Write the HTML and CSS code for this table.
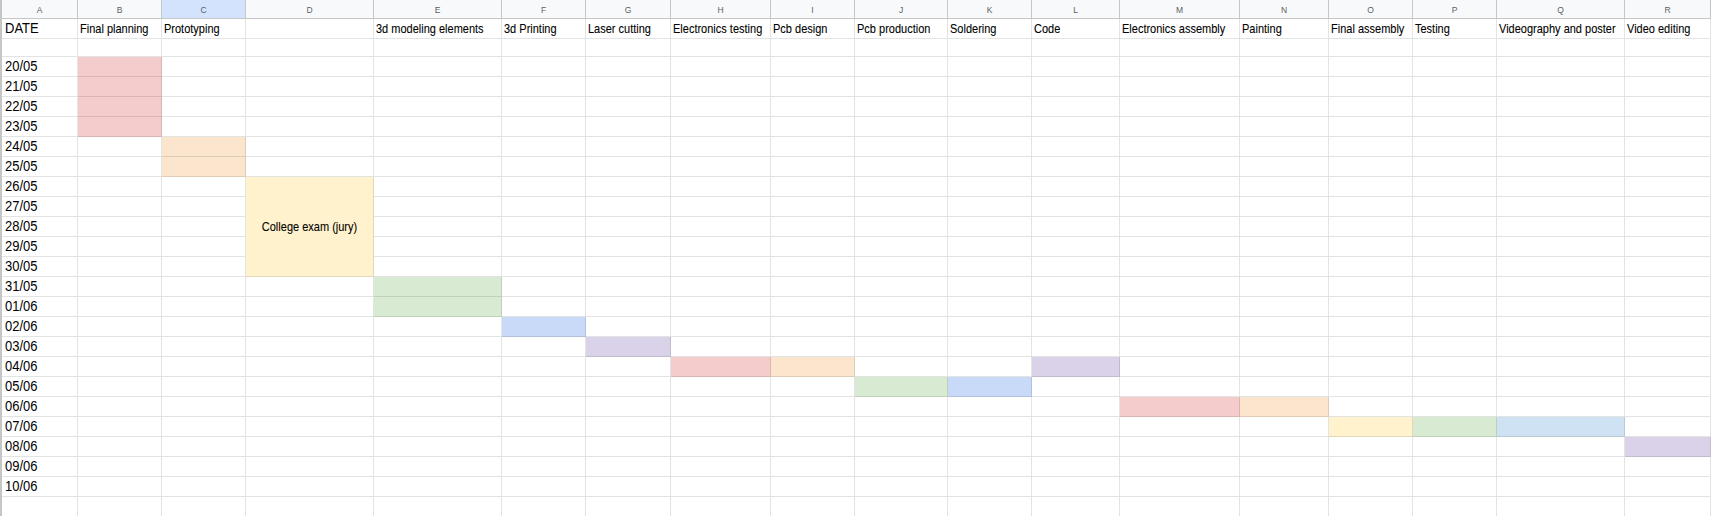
FILE: index.html
```html
<!DOCTYPE html>
<html lang="en">
<head>
<meta charset="utf-8">
<title>Project schedule</title>
<link rel="stylesheet" href="styles.css">
</head>
<body>
<div class="sheet">
  <div class="h">A</div><div class="h">B</div><div class="h sel">C</div><div class="h">D</div><div class="h">E</div><div class="h">F</div><div class="h">G</div><div class="h">H</div><div class="h">I</div><div class="h">J</div><div class="h">K</div><div class="h">L</div><div class="h">M</div><div class="h">N</div><div class="h">O</div><div class="h">P</div><div class="h">Q</div><div class="h">R</div>

  <div class="a"><span class="t">DATE</span></div><div class="l"><span class="t">Final planning</span></div><div class="l"><span class="t">Prototyping</span></div><div></div><div class="l"><span class="t">3d modeling elements</span></div><div class="l"><span class="t">3d Printing</span></div><div class="l"><span class="t">Laser cutting</span></div><div class="l"><span class="t">Electronics testing</span></div><div class="l"><span class="t">Pcb design</span></div><div class="l"><span class="t">Pcb production</span></div><div class="l"><span class="t">Soldering</span></div><div class="l"><span class="t">Code</span></div><div class="l"><span class="t">Electronics assembly</span></div><div class="l"><span class="t">Painting</span></div><div class="l"><span class="t">Final assembly</span></div><div class="l"><span class="t">Testing</span></div><div class="l"><span class="t">Videography and poster</span></div><div class="l"><span class="t">Video editing</span></div>

  <div></div><div></div><div></div><div></div><div></div><div></div><div></div><div></div><div></div><div></div><div></div><div></div><div></div><div></div><div></div><div></div><div></div><div></div>

  <div class="a"><span class="t">20/05</span></div><div class="pk"></div><div></div><div></div><div></div><div></div><div></div><div></div><div></div><div></div><div></div><div></div><div></div><div></div><div></div><div></div><div></div><div></div>
  <div class="a"><span class="t">21/05</span></div><div class="pk"></div><div></div><div></div><div></div><div></div><div></div><div></div><div></div><div></div><div></div><div></div><div></div><div></div><div></div><div></div><div></div><div></div>
  <div class="a"><span class="t">22/05</span></div><div class="pk"></div><div></div><div></div><div></div><div></div><div></div><div></div><div></div><div></div><div></div><div></div><div></div><div></div><div></div><div></div><div></div><div></div>
  <div class="a"><span class="t">23/05</span></div><div class="pk"></div><div></div><div></div><div></div><div></div><div></div><div></div><div></div><div></div><div></div><div></div><div></div><div></div><div></div><div></div><div></div><div></div>
  <div class="a"><span class="t">24/05</span></div><div></div><div class="or"></div><div></div><div></div><div></div><div></div><div></div><div></div><div></div><div></div><div></div><div></div><div></div><div></div><div></div><div></div><div></div>
  <div class="a"><span class="t">25/05</span></div><div></div><div class="or"></div><div></div><div></div><div></div><div></div><div></div><div></div><div></div><div></div><div></div><div></div><div></div><div></div><div></div><div></div><div></div>
  <div class="a"><span class="t">26/05</span></div><div></div><div></div><div class="ye merged"><span class="t mid">College exam (jury)</span></div><div></div><div></div><div></div><div></div><div></div><div></div><div></div><div></div><div></div><div></div><div></div><div></div><div></div><div></div>
  <div class="a"><span class="t">27/05</span></div><div></div><div></div><div></div><div></div><div></div><div></div><div></div><div></div><div></div><div></div><div></div><div></div><div></div><div></div><div></div><div></div>
  <div class="a"><span class="t">28/05</span></div><div></div><div></div><div></div><div></div><div></div><div></div><div></div><div></div><div></div><div></div><div></div><div></div><div></div><div></div><div></div><div></div>
  <div class="a"><span class="t">29/05</span></div><div></div><div></div><div></div><div></div><div></div><div></div><div></div><div></div><div></div><div></div><div></div><div></div><div></div><div></div><div></div><div></div>
  <div class="a"><span class="t">30/05</span></div><div></div><div></div><div></div><div></div><div></div><div></div><div></div><div></div><div></div><div></div><div></div><div></div><div></div><div></div><div></div><div></div>
  <div class="a"><span class="t">31/05</span></div><div></div><div></div><div></div><div class="gr"></div><div></div><div></div><div></div><div></div><div></div><div></div><div></div><div></div><div></div><div></div><div></div><div></div><div></div>
  <div class="a"><span class="t">01/06</span></div><div></div><div></div><div></div><div class="gr"></div><div></div><div></div><div></div><div></div><div></div><div></div><div></div><div></div><div></div><div></div><div></div><div></div><div></div>
  <div class="a"><span class="t">02/06</span></div><div></div><div></div><div></div><div></div><div class="bl"></div><div></div><div></div><div></div><div></div><div></div><div></div><div></div><div></div><div></div><div></div><div></div><div></div>
  <div class="a"><span class="t">03/06</span></div><div></div><div></div><div></div><div></div><div></div><div class="pu"></div><div></div><div></div><div></div><div></div><div></div><div></div><div></div><div></div><div></div><div></div><div></div>
  <div class="a"><span class="t">04/06</span></div><div></div><div></div><div></div><div></div><div></div><div></div><div class="pk"></div><div class="or"></div><div></div><div></div><div class="pu"></div><div></div><div></div><div></div><div></div><div></div><div></div>
  <div class="a"><span class="t">05/06</span></div><div></div><div></div><div></div><div></div><div></div><div></div><div></div><div></div><div class="gr"></div><div class="bl"></div><div></div><div></div><div></div><div></div><div></div><div></div><div></div>
  <div class="a"><span class="t">06/06</span></div><div></div><div></div><div></div><div></div><div></div><div></div><div></div><div></div><div></div><div></div><div></div><div class="pk"></div><div class="or"></div><div></div><div></div><div></div><div></div>
  <div class="a"><span class="t">07/06</span></div><div></div><div></div><div></div><div></div><div></div><div></div><div></div><div></div><div></div><div></div><div></div><div></div><div></div><div class="ye"></div><div class="gr"></div><div class="lb"></div><div></div>
  <div class="a"><span class="t">08/06</span></div><div></div><div></div><div></div><div></div><div></div><div></div><div></div><div></div><div></div><div></div><div></div><div></div><div></div><div></div><div></div><div></div><div class="pu"></div>
  <div class="a"><span class="t">09/06</span></div><div></div><div></div><div></div><div></div><div></div><div></div><div></div><div></div><div></div><div></div><div></div><div></div><div></div><div></div><div></div><div></div><div></div>
  <div class="a"><span class="t">10/06</span></div><div></div><div></div><div></div><div></div><div></div><div></div><div></div><div></div><div></div><div></div><div></div><div></div><div></div><div></div><div></div><div></div><div></div>
  <div></div><div></div><div></div><div></div><div></div><div></div><div></div><div></div><div></div><div></div><div></div><div></div><div></div><div></div><div></div><div></div><div></div><div></div>
</div>
</body>
</html>
```
FILE: styles.css
```css
* { box-sizing: border-box; }
html, body { margin: 0; padding: 0; background: #fff; overflow: hidden; }
body { font-family: "Liberation Sans", Arial, sans-serif; color: #000; }

.sheet {
  display: grid;
  grid-template-columns: 76px 84px 84px 128px 128px 84px 85px 100px 84px 93px 84px 88px 120px 89px 84px 84px 128px 86px;
  grid-template-rows: 19px 20px 18px repeat(22, 20px) 20px;
  border-left: 2px solid #c4c7c5;
  width: 1711px;
}

.sheet > div {
  border-right: 1px solid #e2e3e3;
  border-bottom: 1px solid #e2e3e3;
  overflow: hidden;
  white-space: nowrap;
}

.sheet > .h {
  background: #f8f9fa;
  border-right-color: #c4c7c5;
  border-bottom-color: #c4c7c5;
  color: #5a5e62;
  font-family: "Liberation Sans", Arial, sans-serif;
  font-size: 8.5px;
  display: flex;
  align-items: center;
  justify-content: center;
  padding-top: 1px;
}
.sheet > .h.sel { background: #d3e3fd; }

.a, .l {
  display: flex;
  align-items: flex-end;
  padding-bottom: 2px;
}
.a { font-size: 13px; line-height: 15px; padding-left: 3px; }
.l { font-size: 11px; line-height: 13px; padding-left: 2px; }

.t {
  display: inline-block;
  transform: scaleY(1.12);
  transform-origin: 0 100%;
}
.l .t, .merged .t { -webkit-text-stroke: 0.08px #000; }
.t.mid { transform-origin: 50% 50%; }

.merged {
  grid-row: span 5;
  display: flex;
  align-items: center;
  justify-content: center;
  font-size: 11px;
}

.sheet > .pk, .sheet > .or, .sheet > .ye, .sheet > .gr,
.sheet > .bl, .sheet > .pu, .sheet > .lb {
  border-color: rgba(0, 0, 0, 0.11);
}
.pk { background: #f4cccc; }
.or { background: #fce5cd; }
.ye { background: #fff2cc; }
.gr { background: #d9ead3; }
.bl { background: #c9daf8; }
.pu { background: #d9d2e9; }
.lb { background: #cfe2f3; }
```
